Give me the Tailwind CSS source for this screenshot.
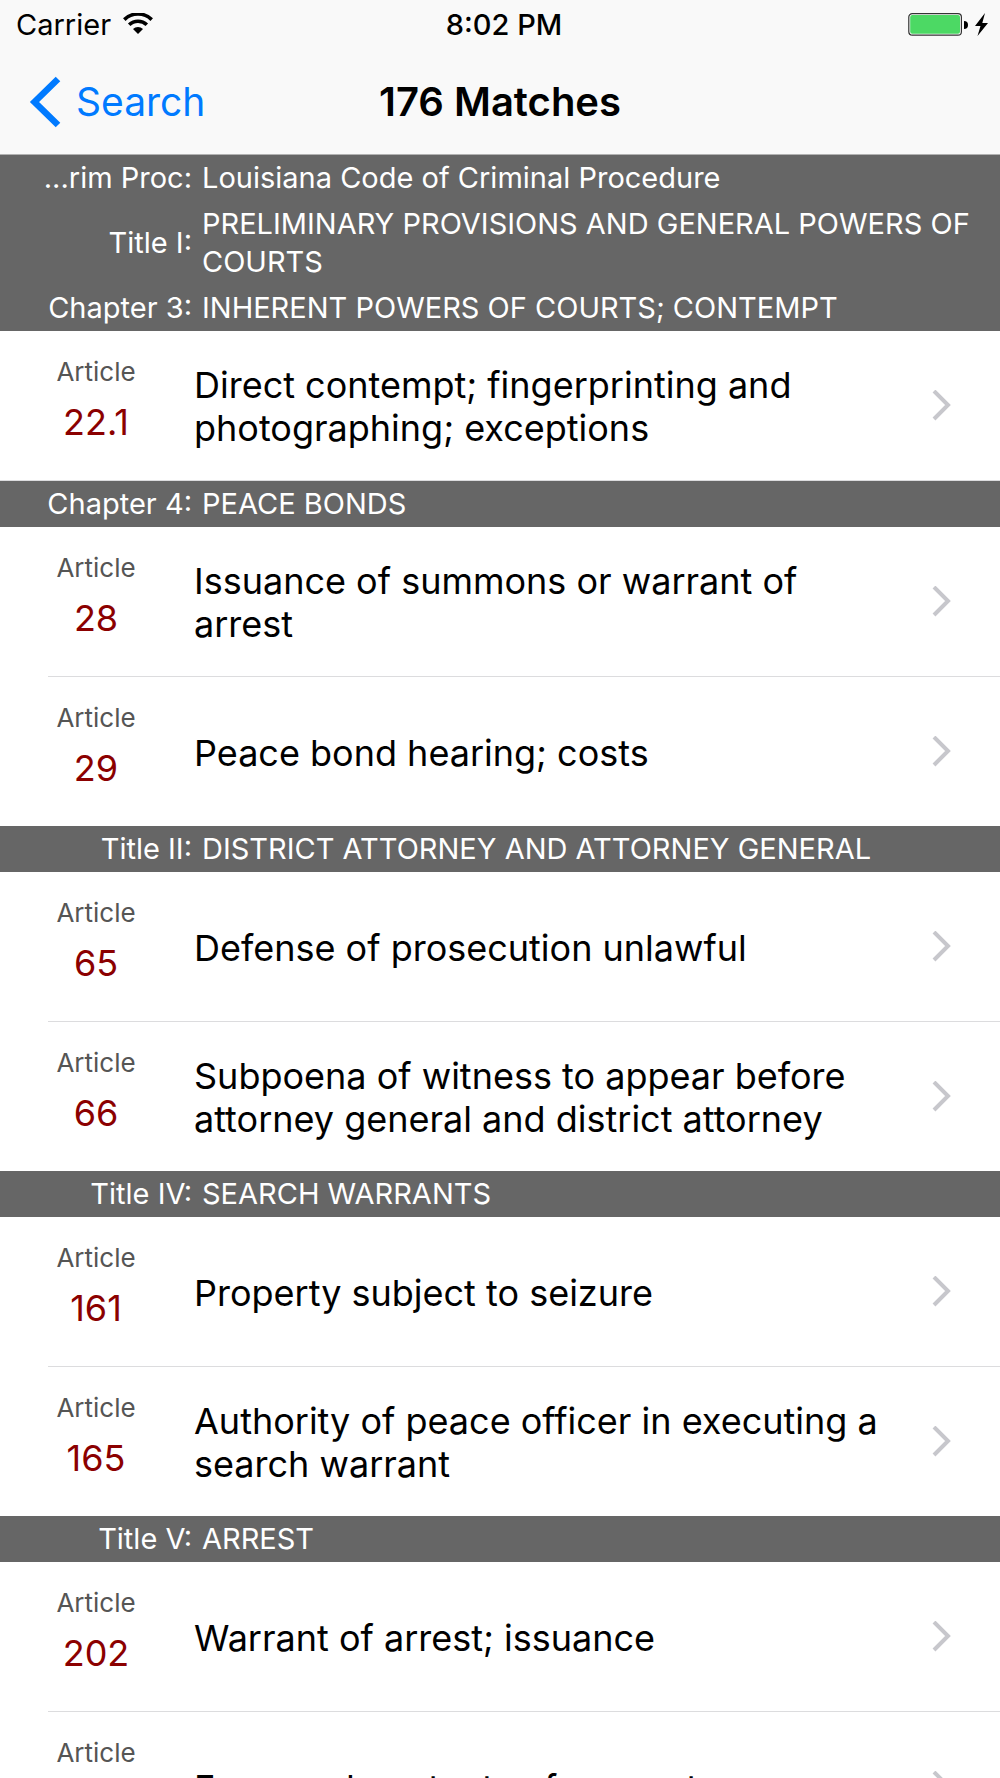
<!DOCTYPE html>
<html lang="en">
  <head>
    <meta charset="UTF-8" />
    <meta name="viewport" content="width=device-width, initial-scale=1.0" />
    <title>176 Matches</title>
    <script src="https://cdn.jsdelivr.net/npm/@tailwindcss/browser@4"></script>
  </head>
  <body class="flex h-screen flex-col overflow-hidden bg-white font-['Inter',sans-serif] text-black">
    <svg class="hidden">
      <symbol id="chevron" viewBox="0 0 20 32">
        <path d="M2 1 L16 15 L2 29" fill="none" stroke="#c7c7cc" stroke-width="4" />
      </symbol>
    </svg>

    <header class="shrink-0 border-b border-[#b2b2b2] bg-[#f9f9f9]">
      <!-- Status bar -->
      <div class="grid h-[50px] grid-cols-[1fr_auto_1fr] items-center pr-2 pl-4 text-[29px] leading-[50px]">
        <div class="flex items-center gap-3">
          <span>Carrier</span>
          <svg class="h-6 w-[30px]" viewBox="0 0 30 24" fill="none" stroke="#000">
            <path d="M1.3 6.6 A19.5 19.5 0 0 1 28.7 6.6" stroke-width="3.6" />
            <path d="M6.2 11.8 A12.5 12.5 0 0 1 23.8 11.8" stroke-width="3.6" />
            <path d="M15 21 L10 16 A7.2 7.2 0 0 1 20 16 Z" fill="#000" stroke="none" />
          </svg>
        </div>
        <span class="font-medium">8:02 PM</span>
        <div class="flex items-center justify-end">
          <svg class="h-[26px] w-[84px]" viewBox="0 0 84 26">
            <rect x="0.8" y="1.6" width="52.6" height="21.6" rx="3.5" fill="#fff" stroke="#333" stroke-width="1.2" />
            <rect x="2.2" y="3" width="49.8" height="18.8" rx="2" fill="#4cd964" />
            <path d="M56 9 A4 4 0 0 1 56 17 Z" fill="#000" />
            <path d="M77 1 L67 14 H72.5 L69.5 24 L80 11 H74.3 Z" fill="#000" />
          </svg>
        </div>
      </div>
      <!-- Navigation bar -->
      <div class="grid h-[104px] grid-cols-[1fr_auto_1fr] items-center px-7 text-[40px]">
        <a href="#" class="flex items-center gap-3 text-[39px] text-[#007aff]">
          <svg class="h-[52px] w-9" viewBox="0 0 36 52">
            <path d="M30 3 L6.5 26 L30 49" fill="none" stroke="#007aff" stroke-width="6.5" />
          </svg>
          <span>Search</span>
        </a>
        <h1 class="font-semibold">176 Matches</h1>
      </div>
    </header>

    <main class="min-h-0 flex-1 overflow-y-auto [scrollbar-width:none]">
      <section>
        <h2 class="bg-[#666] text-[29px] leading-[38px] text-white">
          <span class="flex items-center gap-[10px] py-1 pr-6">
            <span class="w-48 shrink-0 text-right">...rim Proc:</span>
            <span>Louisiana Code of Criminal Procedure</span>
          </span>
          <span class="flex items-center gap-[10px] py-1 pr-6">
            <span class="w-48 shrink-0 text-right">Title I:</span>
            <span>PRELIMINARY PROVISIONS AND GENERAL POWERS OF COURTS</span>
          </span>
          <span class="flex items-center gap-[10px] py-1 pr-6">
            <span class="w-48 shrink-0 text-right">Chapter 3:</span>
            <span>INHERENT POWERS OF COURTS; CONTEMPT</span>
          </span>
        </h2>
        <ul class="border-b border-[#dcdcde] pl-12 text-[36px] leading-[43px]">
          <li>
            <a href="#" class="flex h-[149px] items-center pr-12">
              <span class="w-24 shrink-0 self-start pt-[15px] text-center leading-[51px]">
                <span class="block text-[26px] text-[#555]">Article</span>
                <span class="block text-[#8b0000]">22.1</span>
              </span>
              <span class="ml-[50px] flex-1 pt-[3px]">Direct contempt; fingerprinting and photographing; exceptions</span>
              <svg class="ml-10 h-8 w-5 shrink-0"><use href="#chevron" /></svg>
            </a>
          </li>
        </ul>
      </section>

      <section>
        <h2 class="flex items-center gap-[10px] bg-[#666] py-1 pr-6 text-[29px] leading-[38px] text-white">
          <span class="w-48 shrink-0 text-right">Chapter 4:</span>
          <span>PEACE BONDS</span>
        </h2>
        <ul class="divide-y divide-[#dcdcde] pl-12 text-[36px] leading-[43px]">
          <li>
            <a href="#" class="flex h-[149px] items-center pr-12">
              <span class="w-24 shrink-0 self-start pt-[15px] text-center leading-[51px]">
                <span class="block text-[26px] text-[#555]">Article</span>
                <span class="block text-[#8b0000]">28</span>
              </span>
              <span class="ml-[50px] flex-1 pt-[3px]">Issuance of summons or warrant of arrest</span>
              <svg class="ml-10 h-8 w-5 shrink-0"><use href="#chevron" /></svg>
            </a>
          </li>
          <li>
            <a href="#" class="flex h-[149px] items-center pr-12">
              <span class="w-24 shrink-0 self-start pt-[15px] text-center leading-[51px]">
                <span class="block text-[26px] text-[#555]">Article</span>
                <span class="block text-[#8b0000]">29</span>
              </span>
              <span class="ml-[50px] flex-1 pt-[3px]">Peace bond hearing; costs</span>
              <svg class="ml-10 h-8 w-5 shrink-0"><use href="#chevron" /></svg>
            </a>
          </li>
        </ul>
      </section>

      <section>
        <h2 class="flex items-center gap-[10px] bg-[#666] py-1 pr-6 text-[29px] leading-[38px] text-white">
          <span class="w-48 shrink-0 text-right">Title II:</span>
          <span>DISTRICT ATTORNEY AND ATTORNEY GENERAL</span>
        </h2>
        <ul class="divide-y divide-[#dcdcde] pl-12 text-[36px] leading-[43px]">
          <li>
            <a href="#" class="flex h-[149px] items-center pr-12">
              <span class="w-24 shrink-0 self-start pt-[15px] text-center leading-[51px]">
                <span class="block text-[26px] text-[#555]">Article</span>
                <span class="block text-[#8b0000]">65</span>
              </span>
              <span class="ml-[50px] flex-1 pt-[3px]">Defense of prosecution unlawful</span>
              <svg class="ml-10 h-8 w-5 shrink-0"><use href="#chevron" /></svg>
            </a>
          </li>
          <li>
            <a href="#" class="flex h-[149px] items-center pr-12">
              <span class="w-24 shrink-0 self-start pt-[15px] text-center leading-[51px]">
                <span class="block text-[26px] text-[#555]">Article</span>
                <span class="block text-[#8b0000]">66</span>
              </span>
              <span class="ml-[50px] flex-1 pt-[3px]">Subpoena of witness to appear before attorney general and district attorney</span>
              <svg class="ml-10 h-8 w-5 shrink-0"><use href="#chevron" /></svg>
            </a>
          </li>
        </ul>
      </section>

      <section>
        <h2 class="flex items-center gap-[10px] bg-[#666] py-1 pr-6 text-[29px] leading-[38px] text-white">
          <span class="w-48 shrink-0 text-right">Title IV:</span>
          <span>SEARCH WARRANTS</span>
        </h2>
        <ul class="divide-y divide-[#dcdcde] pl-12 text-[36px] leading-[43px]">
          <li>
            <a href="#" class="flex h-[149px] items-center pr-12">
              <span class="w-24 shrink-0 self-start pt-[15px] text-center leading-[51px]">
                <span class="block text-[26px] text-[#555]">Article</span>
                <span class="block text-[#8b0000]">161</span>
              </span>
              <span class="ml-[50px] flex-1 pt-[3px]">Property subject to seizure</span>
              <svg class="ml-10 h-8 w-5 shrink-0"><use href="#chevron" /></svg>
            </a>
          </li>
          <li>
            <a href="#" class="flex h-[149px] items-center pr-12">
              <span class="w-24 shrink-0 self-start pt-[15px] text-center leading-[51px]">
                <span class="block text-[26px] text-[#555]">Article</span>
                <span class="block text-[#8b0000]">165</span>
              </span>
              <span class="ml-[50px] flex-1 pt-[3px]">Authority of peace officer in executing a search warrant</span>
              <svg class="ml-10 h-8 w-5 shrink-0"><use href="#chevron" /></svg>
            </a>
          </li>
        </ul>
      </section>

      <section>
        <h2 class="flex items-center gap-[10px] bg-[#666] py-1 pr-6 text-[29px] leading-[38px] text-white">
          <span class="w-48 shrink-0 text-right">Title V:</span>
          <span>ARREST</span>
        </h2>
        <ul class="divide-y divide-[#dcdcde] pl-12 text-[36px] leading-[43px]">
          <li>
            <a href="#" class="flex h-[149px] items-center pr-12">
              <span class="w-24 shrink-0 self-start pt-[15px] text-center leading-[51px]">
                <span class="block text-[26px] text-[#555]">Article</span>
                <span class="block text-[#8b0000]">202</span>
              </span>
              <span class="ml-[50px] flex-1 pt-[3px]">Warrant of arrest; issuance</span>
              <svg class="ml-10 h-8 w-5 shrink-0"><use href="#chevron" /></svg>
            </a>
          </li>
          <li>
            <a href="#" class="flex h-[149px] items-center pr-12">
              <span class="w-24 shrink-0 self-start pt-[15px] text-center leading-[51px]">
                <span class="block text-[26px] text-[#555]">Article</span>
                <span class="block text-[#8b0000]">203</span>
              </span>
              <span class="ml-[50px] flex-1 pt-[3px]">Form and contents of warrant</span>
              <svg class="ml-10 h-8 w-5 shrink-0"><use href="#chevron" /></svg>
            </a>
          </li>
        </ul>
      </section>
    </main>
  </body>
</html>
